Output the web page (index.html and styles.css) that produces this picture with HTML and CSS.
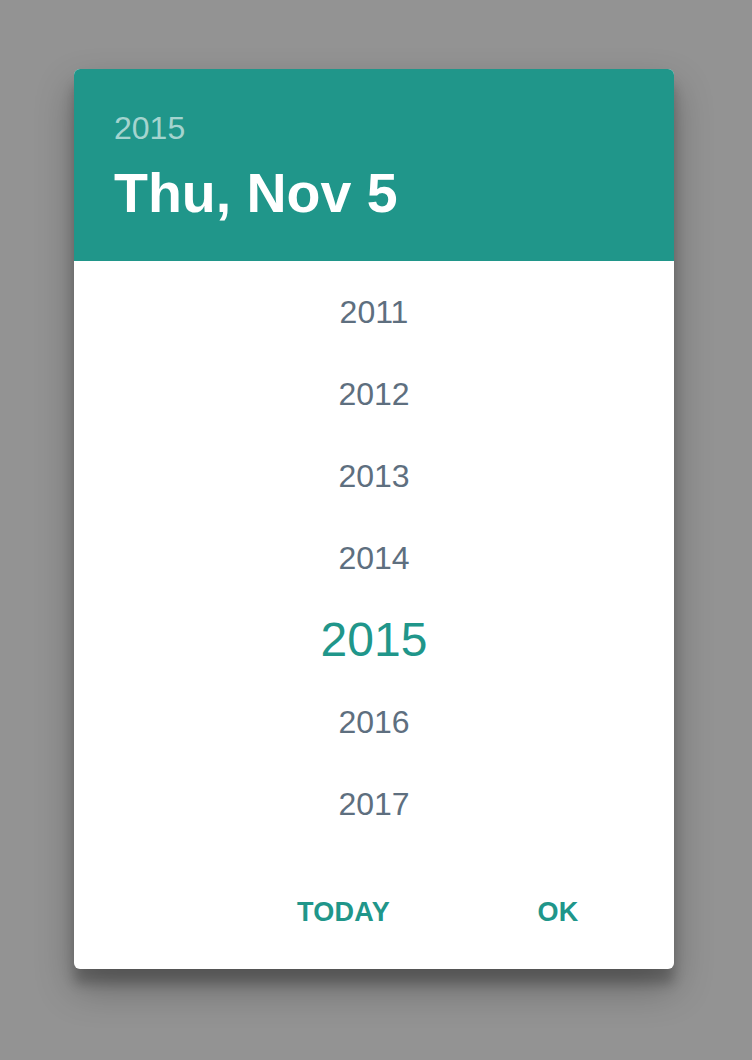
FILE: index.html
```html
<!DOCTYPE html>
<html lang="en">
<head>
<meta charset="utf-8">
<title>Date picker</title>
<link rel="stylesheet" href="styles.css">
</head>
<body>
<div class="dialog">
  <div class="header">
    <div class="header-year">2015</div>
    <div class="header-date">Thu, Nov 5</div>
  </div>
  <ul class="years">
    <li class="year">2011</li>
    <li class="year">2012</li>
    <li class="year">2013</li>
    <li class="year">2014</li>
    <li class="year selected">2015</li>
    <li class="year">2016</li>
    <li class="year">2017</li>
  </ul>
  <div class="actions">
    <button class="btn btn-today">TODAY</button>
    <button class="btn btn-ok">OK</button>
  </div>
</div>
</body>
</html>
```

FILE: styles.css
```css
html, body {
  margin: 0;
  padding: 0;
}
body {
  background: #939393;
  font-family: "Liberation Sans", Arial, Helvetica, sans-serif;
  width: 752px;
  height: 1060px;
  padding: 69px 0 0 74px;
  box-sizing: border-box;
}
.dialog {
  width: 600px;
  height: 900px;
  background: #ffffff;
  border-radius: 6px;
  overflow: hidden;
  box-shadow: 0 19px 38px rgba(0, 0, 0, 0.30), 0 15px 12px rgba(0, 0, 0, 0.22);
  display: flex;
  flex-direction: column;
}
.header {
  background: #20968a;
  height: 192px;
  box-sizing: border-box;
  padding: 39px 40px 0 40px;
}
.header-year {
  font-size: 32px;
  line-height: 40px;
  color: rgba(255, 255, 255, 0.6);
}
.header-date {
  margin-top: 13px;
  font-size: 55.5px;
  line-height: 64px;
  font-weight: bold;
  color: #ffffff;
}
.years {
  list-style: none;
  margin: 0;
  padding: 10px 0 0 0;
  height: 594px;
  box-sizing: border-box;
}
.year {
  height: 82px;
  line-height: 82px;
  text-align: center;
  font-size: 32px;
  color: #5e6f7f;
}
.year.selected {
  font-size: 48px;
  color: #20968a;
}
.actions {
  flex: 1;
  display: flex;
  justify-content: flex-end;
  align-items: center;
  padding-right: 52px;
}
.btn {
  font-family: "Liberation Sans", Arial, Helvetica, sans-serif;
  font-size: 27px;
  font-weight: bold;
  color: #20968a;
  background: transparent;
  border: none;
  height: 72px;
  min-width: 128px;
  padding: 0 32px;
  letter-spacing: 0.3px;
}
.btn-today {
  margin-right: 72px;
}
```
